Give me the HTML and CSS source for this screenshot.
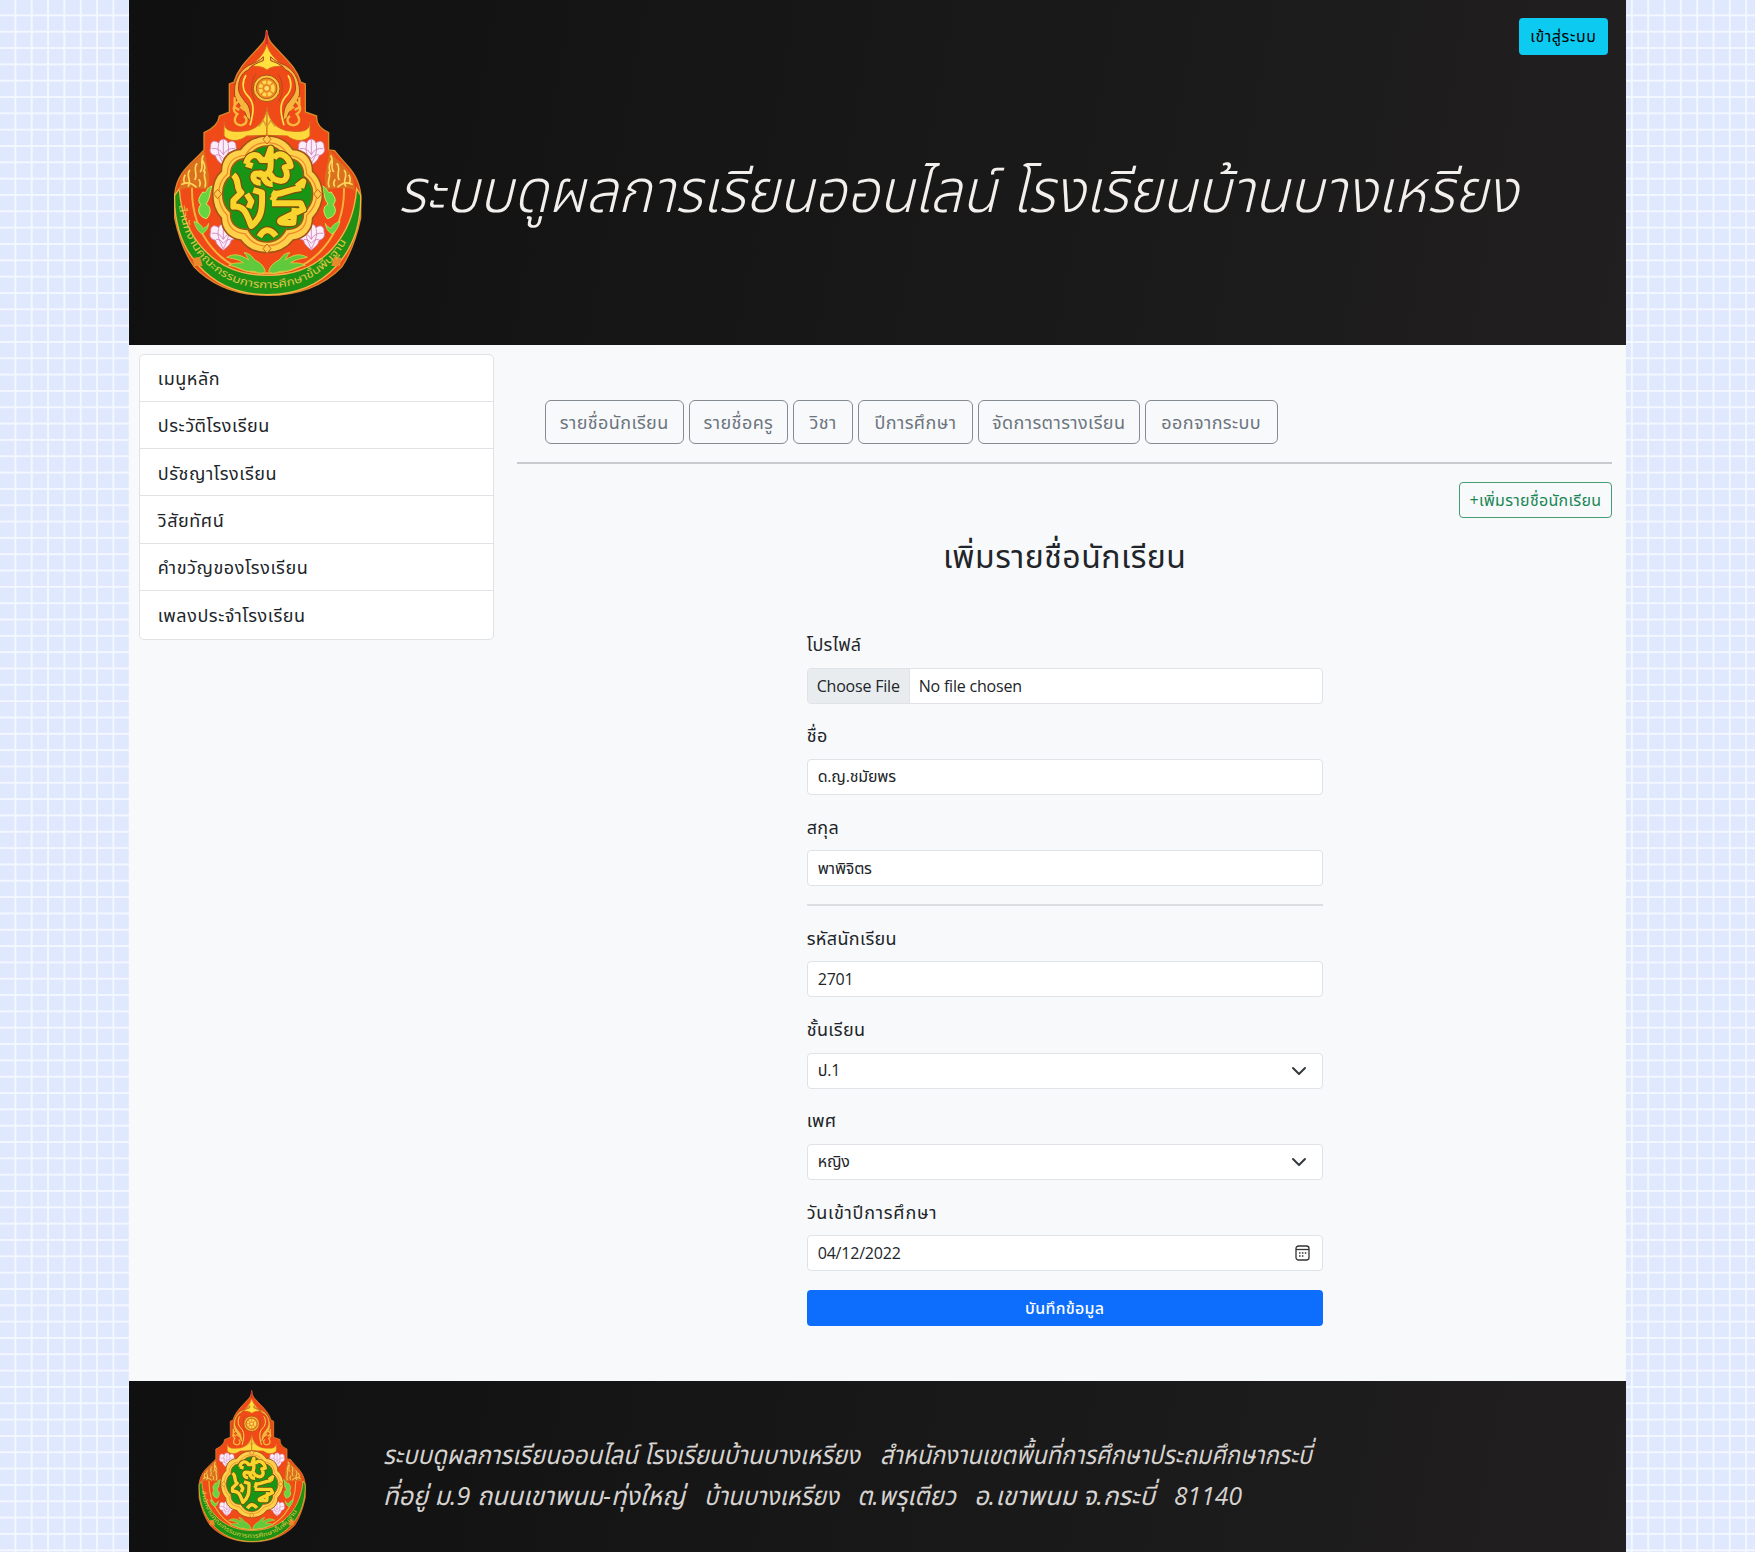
FILE: index.html
```html
<!DOCTYPE html>
<html lang="th">
<head>
<meta charset="utf-8">
<title>ระบบดูผลการเรียนออนไลน์</title>
<link rel="stylesheet" href="styles.css">
</head>
<body>
<svg width="0" height="0" class="defs" aria-hidden="true">
  <defs>
    <path id="ribbon" d="M86 572C92 715 200 835 353 835S616 715 622 572"/>
    <g id="lotus" fill="#fbeef8" stroke="#cf7fbb" stroke-width="2.500">
      <path d="M-38 -12C-40 -34 -22 -34 -14 -24C-10 -40 10 -40 14 -24C24 -36 40 -30 38 -12C44 4 30 12 24 12C20 28 10 34 0 42C-10 34 -20 28 -24 12C-34 12 -44 2 -38 -12Z"/>
      <path fill="none" d="M-14 -22C-20 0 -10 18 0 38C10 18 20 0 14 -22M-35 -8Q-12 -12 0 10Q12 -12 35 -8M-22 10Q-8 8 0 22Q8 8 22 10M0 -34V10"/>
    </g>
    <path id="monogram" d="M288 462C296 430 322 428 334 450H350L362 416V464C362 492 344 500 326 492C304 482 304 520 332 518M288 462L308 468M326 492C344 480 334 524 368 522M372 446C382 422 414 432 422 468L404 472C420 504 404 524 370 506L352 482M250 494C272 514 254 532 274 548L250 572V590C284 586 290 612 304 648C334 624 338 600 336 548L310 540M290 552L304 574L296 594M366 548C388 560 404 540 454 534M366 572L376 556M366 580H452L460 598L408 622C378 634 386 642 430 638L434 594M454 534L460 514L440 530M328 680Q350 642 378 678"/>
    <g id="half">
      <path d="M340 152C318 160 300 168 296 180C276 186 268 206 266 226C262 248 276 262 286 276C302 290 300 314 304 334L290 322C286 298 262 284 254 256C250 220 264 184 296 166C316 158 330 152 340 140Z" fill="#f6b53c" stroke="#a8451b" stroke-width="3"/>
      <path d="M288 196C276 214 276 240 292 256C312 276 314 300 300 346" fill="none" stroke="#ffe14b" stroke-width="5"/>
      <path d="M318 192C300 212 302 252 316 274" fill="none" stroke="#b44a18" stroke-width="3"/>
      <path d="M268 272C246 286 248 304 262 312C250 328 252 342 272 346C292 344 294 326 282 318M254 262V292L268 300M270 290L286 302" fill="none" stroke="#f7b83c" stroke-width="7"/>
      <path d="M222 336C224 368 250 366 292 362C334 352 346 322 351 292V376L290 378C270 394 240 398 222 378Z" fill="#ffd93b" stroke="#d6671f" stroke-width="3"/>
      <path d="M162 420C150 446 124 458 110 478C94 496 88 520 88 542C112 528 150 536 174 540L178 500Z" fill="#d9711f"/>
      <path d="M160 436C148 456 164 472 150 486M142 460C126 474 146 494 134 510M120 480C104 498 128 508 114 530M166 484C156 500 174 512 164 532M94 524Q116 510 140 532M158 452Q170 474 160 486M106 494Q98 506 104 520M146 508Q154 518 148 530" fill="none" stroke="#ffd75a" stroke-width="5"/>
      <path d="M186 528C166 534 174 552 158 546C150 560 140 568 152 584C138 604 150 622 170 626C184 610 184 590 168 582C182 564 178 546 186 528Z" fill="#65d342" stroke="#c7ef58" stroke-width="3"/>
      <path d="M132 634Q156 642 158 656Q176 648 176 640Q174 662 156 672Q138 660 132 634Z" fill="#65d342" stroke="#c7ef58" stroke-width="2"/>
      <path d="M346 784C330 798 316 780 300 784C280 784 264 770 236 766C254 756 266 760 280 758C262 746 246 746 230 742C250 730 270 732 296 750C288 736 290 734 282 728C296 728 306 738 312 748C324 756 340 762 346 784Z" fill="#61c93c" stroke="#d6cc3c" stroke-width="3"/>
      <path d="M128 744L150 740L158 768H132Z" fill="#e78a2b"/>
    </g>
    <symbol id="emblem" viewBox="0 0 720 900">
      <path d="M350 60C354 86 358 94 372 108C404 144 440 172 452 216L466 222V306L500 318C498 340 510 356 536 368V420L554 422C584 464 624 484 632 552V624C620 680 602 730 576 770C512 836 430 856 353 856S196 836 132 770C104 730 86 680 74 624V552C82 484 122 464 162 420V368C188 356 206 340 208 318L238 306V222L252 216C264 172 298 144 330 108C344 94 348 86 350 60Z" fill="#f04a18" stroke="#d98a28" stroke-width="4"/>
      <path d="M350 64V110" stroke="#d92c32" stroke-width="7"/>
      <path d="M350 102C344 132 326 146 306 166C320 172 334 166 351 180C368 166 382 172 396 166C376 146 358 132 350 102Z" fill="#ffe040" stroke="#dd711b" stroke-width="3"/>
      <path d="M88 536C96 668 180 796 353 796S610 668 620 536L632 556C636 720 530 854 353 854S70 720 74 556Z" fill="#1e9014" stroke="#f2b545" stroke-width="4"/>
      <path d="M126 534C124 668 210 790 353 790S584 668 582 534" fill="none" stroke="#f3b13a" stroke-width="6"/>
      <use href="#half"/>
      <use href="#half" transform="matrix(-1 0 0 1 702 0)"/>
      <circle cx="350" cy="235" r="40" fill="#ffc33b" stroke="#a5521b" stroke-width="3"/>
      <circle cx="350" cy="235" r="31" fill="#eb8a25" stroke="#b25c19" stroke-width="3"/>
      <circle cx="350" cy="235" r="19" fill="none" stroke="#ffd750" stroke-width="11" stroke-dasharray="11 4"/>
      <circle cx="350" cy="235" r="7" fill="#ffe16a"/>
      <path d="M326 350L340 332L350 350L362 332L376 350M350 306V330" fill="none" stroke="#d59a2f" stroke-width="4"/>
      <use href="#lotus" transform="translate(220 424)"/>
      <use href="#lotus" transform="translate(484 424)"/>
      <use href="#lotus" transform="translate(220 678)"/>
      <use href="#lotus" transform="translate(484 678)"/>
      <path d="M350 378C388 378 412 394 428 418C464 420 488 444 488 484C508 500 518 530 518 552S508 604 488 624C488 660 464 686 430 690C408 718 382 728 350 728S292 718 272 690C238 686 214 660 214 624C194 604 188 576 188 552S194 500 214 484C214 444 238 420 272 418C290 394 314 378 350 378Z" fill="#ffd04a" stroke="#a55318" stroke-width="5"/>
      <path d="M350 398C380 398 402 412 414 436C450 438 470 458 470 492C492 510 500 532 500 552S492 596 470 616C470 650 450 668 416 672C398 698 376 708 350 708S304 698 286 672C250 668 232 650 232 616C212 596 206 574 206 552S212 510 232 492C232 458 252 438 286 436C300 412 322 398 350 398Z" fill="none" stroke="#ef8c2c" stroke-width="4"/>
      <path d="M350 408C376 408 396 424 406 446C444 444 462 468 460 498C480 512 488 532 488 552S480 592 460 608C462 642 440 660 408 658C396 682 376 696 350 696S306 682 294 658C262 660 240 642 242 608C224 592 218 572 218 552S224 512 242 498C240 468 258 444 294 446C306 424 326 408 350 408Z" fill="#189515" stroke="#9b5b15" stroke-width="5"/>
      <g fill="none" stroke-linejoin="round">
        <use href="#monogram" stroke="#7c4a0b" stroke-width="25"/>
        <use href="#monogram" stroke="#f7d52d" stroke-width="18"/>
      </g>
      <g fill="#ffc94a" stroke="#cc671d" stroke-width="3"><path d="M351 374l12 14-12 14-12-14zM203 538l12 14-12 14-12-14zM503 538l12 14-12 14-12-14zM351 702l12 14-12 14-12-14z"/></g>
      <text class="ribbon-text"><textPath href="#ribbon" startOffset="14" textLength="690" lengthAdjust="spacingAndGlyphs">สำนักงานคณะกรรมการการศึกษาขั้นพื้นฐาน</textPath></text>
    </symbol>
  </defs>
</svg>
<div class="page">
  <header class="banner">
    <svg class="banner-emblem" viewBox="0 0 720 900"><use href="#emblem"/></svg>
    <svg class="banner-title" viewBox="0 0 1130 200"><text x="-3" y="112" textLength="1120" lengthAdjust="spacingAndGlyphs">ระบบดูผลการเรียนออนไลน์ โรงเรียนบ้านบางเหรียง</text></svg>
    <a class="login">เข้าสู่ระบบ</a>
  </header>
  <div class="body">
    <nav class="menu">
      <a>เมนูหลัก</a>
      <a>ประวัติโรงเรียน</a>
      <a>ปรัชญาโรงเรียน</a>
      <a>วิสัยทัศน์</a>
      <a>คำขวัญของโรงเรียน</a>
      <a>เพลงประจำโรงเรียน</a>
    </nav>
    <main class="content">
      <div class="tabs">
        <a class="t1">รายชื่อนักเรียน</a>
        <a class="t2">รายชื่อครู</a>
        <a class="t3">วิชา</a>
        <a class="t4">ปีการศึกษา</a>
        <a class="t5">จัดการตารางเรียน</a>
        <a class="t6">ออกจากระบบ</a>
      </div>
      <hr class="rule">
      <div class="actions"><a class="add">+เพิ่มรายชื่อนักเรียน</a></div>
      <h2 class="heading">เพิ่มรายชื่อนักเรียน</h2>
      <form class="form">
        <div class="field"><label>โปรไฟล์</label><div class="control file"><span class="choose">Choose File</span><span class="chosen">No file chosen</span></div></div>
        <div class="field"><label>ชื่อ</label><div class="control">ด.ญ.ชมัยพร</div></div>
        <div class="field"><label>สกุล</label><div class="control">พาพิจิตร</div></div>
        <hr class="form-rule">
        <div class="field"><label>รหัสนักเรียน</label><div class="control">2701</div></div>
        <div class="field"><label>ชั้นเรียน</label><div class="control">ป.1<svg class="chevron" viewBox="0 0 16 16"><path d="m2 5 6 6 6-6"/></svg></div></div>
        <div class="field"><label>เพศ</label><div class="control">หญิง<svg class="chevron" viewBox="0 0 16 16"><path d="m2 5 6 6 6-6"/></svg></div></div>
        <div class="field"><label class="wide">วันเข้าปีการศึกษา</label><div class="control date">04/12/2022<svg class="calendar" viewBox="0 0 15 16"><rect x="1" y="1" width="13" height="14" rx="2.500"/><path d="M1 4.500h13"/><path class="dots" d="M4 8h1.500M6.900 8h1.500M9.800 8h1.500M4 11h1.500M6.900 11h1.500"/></svg></div></div>
        <button type="button" class="save">บันทึกข้อมูล</button>
      </form>
    </main>
  </div>
  <footer class="footer">
    <svg class="footer-emblem" viewBox="0 0 720 900"><use href="#emblem"/></svg>
    <svg class="footer-text" viewBox="0 0 940 171">
      <text x="-1" y="83" textLength="477" lengthAdjust="spacingAndGlyphs">ระบบดูผลการเรียนออนไลน์ โรงเรียนบ้านบางเหรียง</text>
      <text x="496" y="83" textLength="432" lengthAdjust="spacingAndGlyphs">สำหนักงานเขตพื้นที่การศึกษาประถมศึกษากระบี่</text>
      <text x="-1" y="124" textLength="302" lengthAdjust="spacingAndGlyphs">ที่อยู่ ม.9 ถนนเขาพนม-ทุ่งใหญ่</text>
      <text x="320" y="124" textLength="135" lengthAdjust="spacingAndGlyphs">บ้านบางเหรียง</text>
      <text x="473" y="124" textLength="99" lengthAdjust="spacingAndGlyphs">ต.พรุเตียว</text>
      <text x="590" y="124" textLength="181" lengthAdjust="spacingAndGlyphs">อ.เขาพนม จ.กระบี่</text>
      <text x="790" y="124" textLength="68" lengthAdjust="spacingAndGlyphs">81140</text>
    </svg>
  </footer>
</div>
</body>
</html>
```
FILE: styles.css
```css
* { box-sizing: border-box; }
body {
  margin: 0;
  background-color: #e0e8fd;
  background-image:
    linear-gradient(to right, transparent 14.700px, #f3f7ff 14.700px),
    linear-gradient(to bottom, transparent 14.700px, #f3f7ff 14.700px);
  background-size: 16.330px 16.330px;
  color: #212529;
  font: 18px/27px "Open Sans", "Noto Sans Thai", "Liberation Sans", sans-serif;
}
.defs { display: block; position: absolute; }
.page { width: 1497.400px; min-height: 1552px; margin: 0 auto; background: #f8f9fb; display: flex; flex-direction: column; }
.banner, .footer { background: linear-gradient(100deg, #101010, #171717 45%, #211f1f); display: flex; flex: none; }
.banner { height: 344.500px; padding: 10px 18.500px 0 21px; position: relative; }
.banner-emblem { width: 240px; height: 300px; flex: none; }
.banner-title { width: 1130px; height: 200px; margin: 90px 0 0 11px; flex: none; overflow: visible; }
.banner-title text { font-size: 60px; font-style: italic; font-weight: 300; fill: #f3efec; }
.ribbon-text { font-size: 32px; fill: #dfc845; font-weight: 400; }
.login { position: absolute; top: 18px; right: 18.500px; width: 88.500px; height: 36.500px; border-radius: 4px; background: #0dcaf0; color: #000; font-size: 16px; line-height: 36px; text-align: center; white-space: nowrap; letter-spacing: .6px; }
.body { display: flex; height: 1036.500px; padding: 9px 14px 0 10px; }
.menu { width: 355px; height: 286px; border: 1px solid #e0e2e5; border-radius: 5px; background: #fff; display: grid; grid-template-rows: repeat(6, 1fr); overflow: hidden; }
.menu a { padding: 10.500px 18px 0; border-bottom: 1px solid #e0e2e5; letter-spacing: .55px; }
.menu a:last-child { border: 0; }
.content { width: 1095px; margin-left: auto; padding-top: 46px; }
.tabs { display: flex; gap: 5px; padding-left: 27.500px; height: 44px; }
.tabs a { border: 1px solid #848b91; border-radius: 6px; color: #6c757d; text-align: center; line-height: 43px; white-space: nowrap; flex: none; letter-spacing: .4px; }
.t1 { width: 139px; } .t2 { width: 99.500px; } .t3 { width: 60px; } .t4 { width: 114.500px; } .t5 { width: 162px; } .t6 { width: 133px; }
.rule, .form-rule { border: 0; height: 2px; margin: 18px 0; background: #c8cacd; }
.rule { margin-top: 18.500px; }
.actions { display: flex; justify-content: flex-end; height: 36px; }
.add { width: 153.500px; border: 1px solid #469c73; border-radius: 4px; color: #198754; font-size: 16px; line-height: 35px; text-align: center; white-space: nowrap; letter-spacing: .3px; }
.heading { margin: 16px 0 0; font-size: 32px; font-weight: 400; line-height: 44px; text-align: center; letter-spacing: .5px; }
.form { width: 516px; margin: 53px auto 0; padding: 0; }
.field { height: 91.300px; }
.field label { display: block; height: 36.500px; line-height: 27px; letter-spacing: .35px; }
.field .wide { letter-spacing: .75px; }
.control { display: flex; align-items: center; height: 36px; padding: 0 10px; border: 1px solid #dfe2e6; border-radius: 4px; background: #fff; font-size: 16px; white-space: nowrap; letter-spacing: -.2px; }
.file { padding: 0; overflow: hidden; }
.choose { width: 102px; padding-left: 9px; height: 100%; line-height: 34px; background: #e9ecef; border-right: 1px solid #dfe2e6; }
.chosen { padding-left: 9px; line-height: 34px; }
.form-rule { margin: -.500px 0 18.500px; background: #dcdee1; }
.chevron { width: 16px; height: 16px; margin: 0 5px 0 auto; fill: none; stroke: #343a40; stroke-width: 2; stroke-linecap: round; stroke-linejoin: round; }
.calendar { width: 15px; height: 16px; margin: 0 2px 0 auto; fill: none; stroke: #333; stroke-width: 1.300; }
.dots { stroke-width: 1.500; }
.save { display: block; width: 100%; height: 36px; border: 0; border-radius: 4px; background: #0d6efd; color: #fff; font: 500 16px/34px "Open Sans", "Noto Sans Thai", sans-serif; letter-spacing: .3px; }
.footer { height: 171px; padding-left: 50px; }
.footer-emblem { width: 137px; height: 171.300px; margin: -2.500px 0 0 6px; flex: none; }
.footer-text { width: 940px; height: 171px; margin-left: 62px; overflow: visible; }
.footer-text text { font-size: 26px; font-style: italic; fill: #d6d3d0; }
```
